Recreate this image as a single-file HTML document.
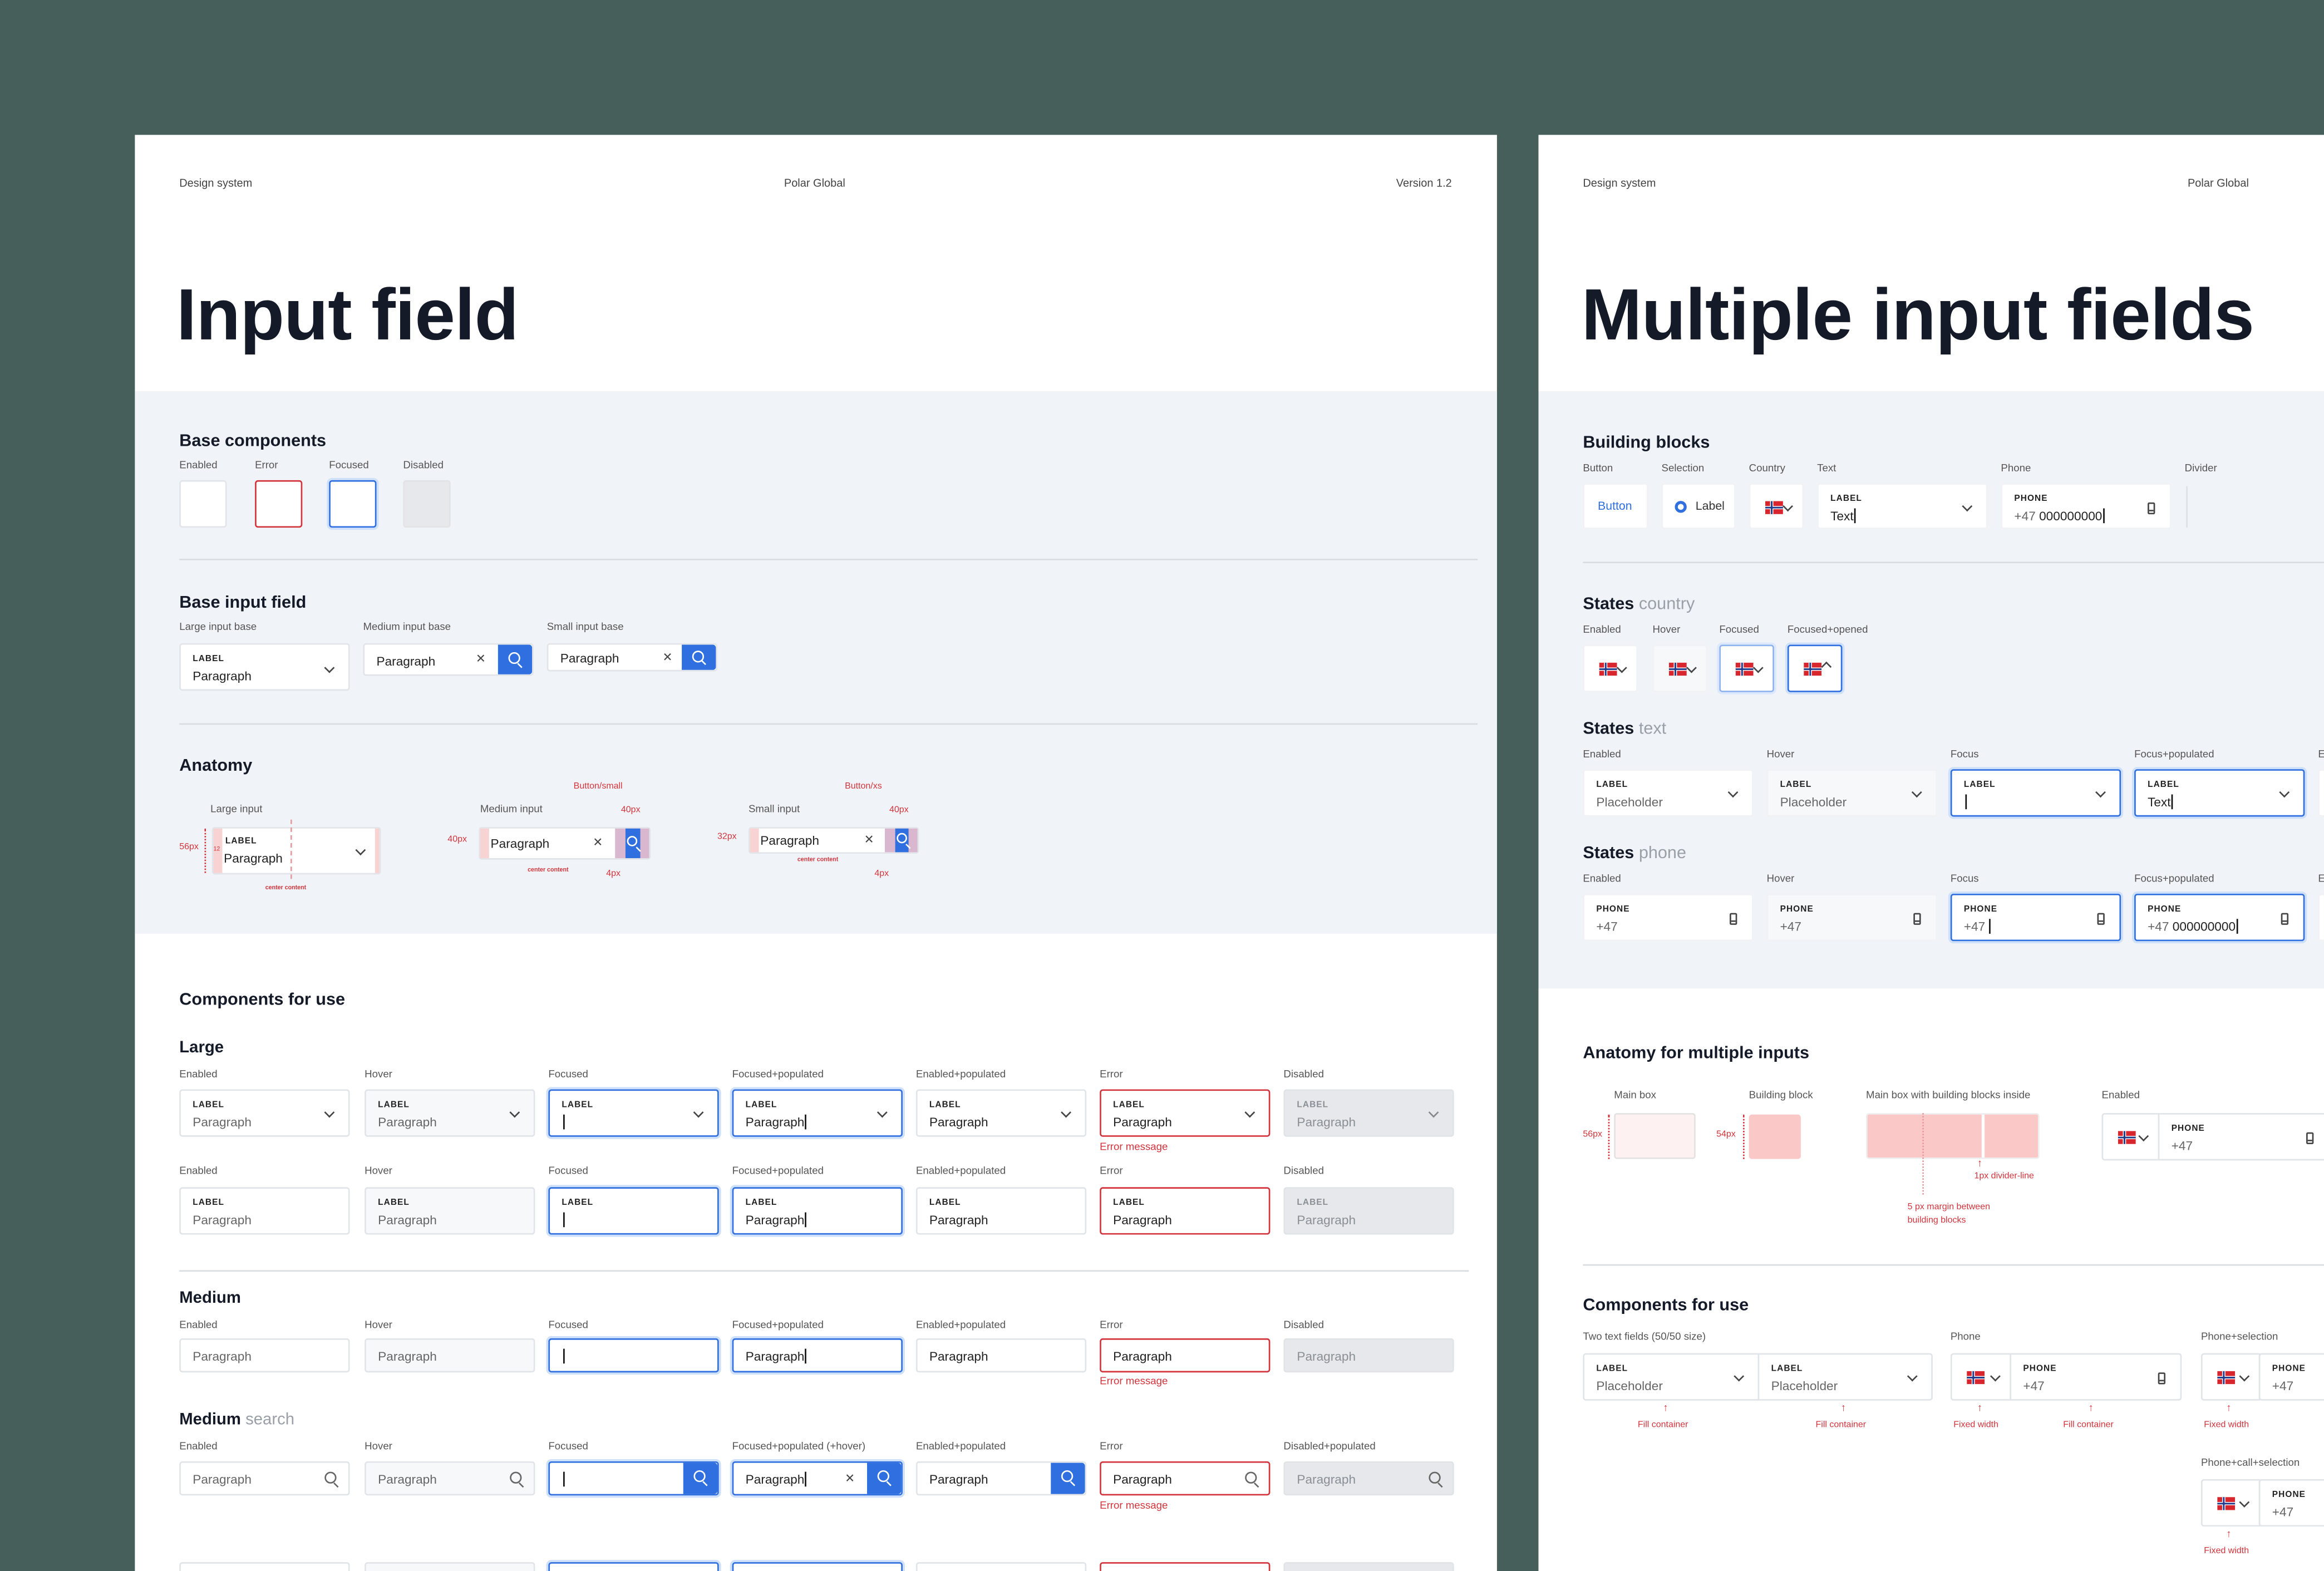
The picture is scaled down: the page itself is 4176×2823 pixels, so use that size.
<!DOCTYPE html>
<html><head><meta charset="utf-8"><style>
html,body{margin:0;padding:0;width:4176px;height:2823px;overflow:hidden;background:#475f5a}
#w{position:absolute;left:0;top:0;width:1568px;height:1060px;transform:scale(2.66327);transform-origin:0 0;font-family:"Liberation Sans",sans-serif;color:#1a1f2b;overflow:hidden}
.a{position:absolute}
.card{position:absolute;background:#fff;overflow:hidden}
.gray{position:absolute;background:#f0f3f7}
.hd{position:absolute;font-size:7.5px;color:#444;top:119px}
.ttl{position:absolute;font-size:49px;font-weight:bold;color:#141a28;letter-spacing:-0.3px;top:185px}
.h2{position:absolute;font-size:11.5px;font-weight:bold;color:#141a28;margin-top:2px}
.h3{position:absolute;font-size:11px;font-weight:bold;color:#141a28;margin-top:2px}
.h2 span,.h3 span{color:#9aa0a8;font-weight:normal}
.t{position:absolute;font-size:7px;color:#555;white-space:nowrap;margin-top:1px}
.f{position:absolute;box-sizing:border-box;width:115px;height:32px;background:#fff;border:1px solid #e1e4e8;border-radius:2px}
.hv{background:#f7f8fa}
.fo{border:1.3px solid #2f6fdf;box-shadow:0 0 0 1.5px #cfe0fa}
.er{border:1px solid #d3343c}
.di{background:#e6e8eb;border-color:#e1e3e6}
.L{position:absolute;left:8px;top:7px;font-size:5.8px;font-weight:bold;color:#222;letter-spacing:.4px;font-style:normal}
.P{position:absolute;left:8px;top:16px;font-size:8.5px;color:#666;font-style:normal;white-space:nowrap}
.m .P{top:6px}
.dk{color:#222}
.di .L,.di .P{color:#8a8f96}
.ch{position:absolute;right:11px;top:12px;width:3.5px;height:3.5px;border-right:1px solid #444;border-bottom:1px solid #444;transform:rotate(45deg)}
.up{transform:rotate(-135deg);top:14px}
.m .ch{top:7px}
.cu{display:inline-block;width:.8px;height:10px;background:#111;vertical-align:-2px;margin-left:.5px}
.srb{position:absolute;right:0;top:0;bottom:0;width:23px;background:#2f6fdf;border-radius:0 2px 2px 0}
.sr{position:absolute;width:6px;height:6px;border:1.1px solid #fff;border-radius:50%;left:7px;top:5px}
.sr:after{content:"";position:absolute;width:1.2px;height:3.5px;background:#fff;left:6px;top:5.5px;transform:rotate(-45deg)}
.sg{border-color:#666;left:auto;right:8px;top:6px}
.sg:after{background:#666}
.x{position:absolute;font-size:8px;color:#444}
.ph{position:absolute;right:10px;top:12px;width:3.5px;height:6px;border:.9px solid #444;border-radius:1px}
.ph:after{content:"";position:absolute;left:0;right:0;bottom:1px;border-top:.6px solid #444}
.emsg{position:absolute;font-size:7px;color:#d3343c;margin-top:1px}
.line{position:absolute;height:1px;background:#d9dde2}
.red{position:absolute;color:#d3343c;font-size:6px;white-space:nowrap}
.flag{position:absolute;width:12px;height:9px;display:block}
.cty{position:absolute;box-sizing:border-box;height:32px;background:#fff;border:1px solid #e1e4e8;border-radius:2px}
.cty .flag{left:10px;top:11px}
.cty .ch{right:8px;top:12px}
</style></head><body><div id="w">

<svg width="0" height="0" style="position:absolute"><defs><g id="no"><rect width="22" height="16" fill="#d8262e"/><rect x="6" width="4" height="16" fill="#fff"/><rect y="6" width="22" height="4" fill="#fff"/><rect x="7" width="2" height="16" fill="#1e3a8a"/><rect y="7" width="22" height="2" fill="#1e3a8a"/></g></defs></svg>

<!-- LEFT CARD -->
<div class="card" style="left:91px;top:91px;width:919px;height:980px">
<div style="position:absolute;left:-91px;top:-91px;width:1200px;height:1100px">
<div class="hd" style="left:121px">Design system</div>
<div class="hd" style="left:529px">Polar Global</div>
<div class="hd" style="left:942px">Version 1.2</div>
<div class="ttl" style="left:119px">Input field</div>
<div class="gray" style="left:91px;top:264px;width:919px;height:366px"></div>

<div class="h2" style="left:121px;top:290px">Base components</div>
<div class="t" style="left:121px;top:310px">Enabled</div>
<div class="t" style="left:172px;top:310px">Error</div>
<div class="t" style="left:222px;top:310px">Focused</div>
<div class="t" style="left:272px;top:310px">Disabled</div>
<div class="f" style="left:121px;top:324px;width:32px;height:32px"></div>
<div class="f er" style="left:172px;top:324px;width:32px;height:32px"></div>
<div class="f fo" style="left:222px;top:324px;width:32px;height:32px"></div>
<div class="f di" style="left:272px;top:324px;width:32px;height:32px"></div>
<div class="line" style="left:121px;top:377px;width:876px"></div>

<div class="h2" style="left:121px;top:399px">Base input field</div>
<div class="t" style="left:121px;top:419px">Large input base</div>
<div class="t" style="left:245px;top:419px">Medium input base</div>
<div class="t" style="left:369px;top:419px">Small input base</div>
<div class="f" style="left:121px;top:434px;height:32px"><i class="L">LABEL</i><i class="P dk">Paragraph</i><b class="ch" style="top:13px"></b></div>
<div class="f m" style="left:245px;top:434px;height:22px"><i class="P dk">Paragraph</i><span class="x" style="left:75px;top:5px">✕</span><div class="srb"><i class="sr"></i></div></div>
<div class="f m" style="left:369px;top:434px;height:19px"><i class="P dk" style="top:4px">Paragraph</i><span class="x" style="left:77px;top:4px">✕</span><div class="srb"><i class="sr" style="top:3.5px"></i></div></div>
<div class="line" style="left:121px;top:488px;width:876px"></div>

<div class="h2" style="left:121px;top:509px">Anatomy</div>
<div class="t" style="left:142px;top:542px">Large input</div>
<div class="f" style="left:143px;top:558px;width:114px;height:32px"><div class="a" style="left:0;top:0;bottom:0;width:6px;background:#f8d3d3"></div><div class="a" style="right:0;top:0;bottom:0;width:3px;background:#f8d3d3"></div><i class="L" style="left:8px;top:6px">LABEL</i><i class="P dk" style="left:7px;top:15px">Paragraph</i><b class="ch"></b></div>
<div class="red" style="left:121px;top:569px">56px</div>
<div class="a" style="left:138px;top:559px;height:30px;border-left:1px dotted #d3343c"></div>
<div class="red" style="left:144px;top:570px;font-size:4px">12</div>
<div class="red" style="left:179px;top:596px;font-weight:bold;font-size:4px">center content</div>
<div class="a" style="left:196px;top:553px;height:40px;border-left:.7px dashed #e59a9e"></div>
<div class="t" style="left:324px;top:542px">Medium input</div>
<div class="red" style="left:387px;top:528px">Button/small</div>
<div class="red" style="left:419px;top:544px">40px</div>
<div class="f" style="left:323px;top:558px;width:116px;height:22px"><div class="a" style="left:0;top:0;bottom:0;width:6px;background:#f8d3d3"></div><i class="P dk" style="left:7px;top:5px">Paragraph</i><span class="x" style="left:76px;top:5px">✕</span><div class="a" style="right:0;top:0;bottom:0;width:23px;background:#d9b8cf"></div><div class="a" style="right:6px;top:0;bottom:0;width:10px;background:#2f6fdf"></div><i class="sr" style="left:99px;top:5px;width:5px;height:5px"></i></div>
<div class="red" style="left:302px;top:564px">40px</div>
<div class="red" style="left:356px;top:584px;font-weight:bold;font-size:4px">center content</div>
<div class="red" style="left:409px;top:587px">4px</div>
<div class="t" style="left:505px;top:542px">Small input</div>
<div class="red" style="left:570px;top:528px">Button/xs</div>
<div class="red" style="left:600px;top:544px">40px</div>
<div class="f" style="left:505px;top:558px;width:115px;height:18px"><div class="a" style="left:0;top:0;bottom:0;width:6px;background:#f8d3d3"></div><i class="P dk" style="left:7px;top:3px">Paragraph</i><span class="x" style="left:77px;top:3px">✕</span><div class="a" style="right:0;top:0;bottom:0;width:22px;background:#d9b8cf"></div><div class="a" style="right:6px;top:0;bottom:0;width:9px;background:#2f6fdf"></div><i class="sr" style="left:99px;top:3px;width:5px;height:5px"></i></div>
<div class="red" style="left:484px;top:562px">32px</div>
<div class="red" style="left:538px;top:577px;font-weight:bold;font-size:4px">center content</div>
<div class="red" style="left:590px;top:587px">4px</div>

<div class="h2" style="left:121px;top:667px">Components for use</div>
<div class="h3" style="left:121px;top:699px">Large</div>

<div class="t" style="left:121px;top:721px">Enabled</div><div class="t" style="left:246px;top:721px">Hover</div><div class="t" style="left:370px;top:721px">Focused</div><div class="t" style="left:494px;top:721px">Focused+populated</div><div class="t" style="left:618px;top:721px">Enabled+populated</div><div class="t" style="left:742px;top:721px">Error</div><div class="t" style="left:866px;top:721px">Disabled</div>
<div class="f" style="left:121px;top:735px"><i class="L">LABEL</i><i class="P">Paragraph</i><b class="ch"></b></div>
<div class="f hv" style="left:246px;top:735px"><i class="L">LABEL</i><i class="P">Paragraph</i><b class="ch"></b></div>
<div class="f fo" style="left:370px;top:735px"><i class="L">LABEL</i><i class="P"><span class="cu"></span></i><b class="ch"></b></div>
<div class="f fo" style="left:494px;top:735px"><i class="L">LABEL</i><i class="P dk">Paragraph<span class="cu"></span></i><b class="ch"></b></div>
<div class="f" style="left:618px;top:735px"><i class="L">LABEL</i><i class="P dk">Paragraph</i><b class="ch"></b></div>
<div class="f er" style="left:742px;top:735px"><i class="L">LABEL</i><i class="P dk">Paragraph</i><b class="ch"></b></div>
<div class="f di" style="left:866px;top:735px"><i class="L">LABEL</i><i class="P">Paragraph</i><b class="ch" style="border-color:#888"></b></div>
<div class="emsg" style="left:742px;top:770px">Error message</div>

<div class="t" style="left:121px;top:786px">Enabled</div><div class="t" style="left:246px;top:786px">Hover</div><div class="t" style="left:370px;top:786px">Focused</div><div class="t" style="left:494px;top:786px">Focused+populated</div><div class="t" style="left:618px;top:786px">Enabled+populated</div><div class="t" style="left:742px;top:786px">Error</div><div class="t" style="left:866px;top:786px">Disabled</div>
<div class="f" style="left:121px;top:801px"><i class="L">LABEL</i><i class="P">Paragraph</i></div>
<div class="f hv" style="left:246px;top:801px"><i class="L">LABEL</i><i class="P">Paragraph</i></div>
<div class="f fo" style="left:370px;top:801px"><i class="L">LABEL</i><i class="P"><span class="cu"></span></i></div>
<div class="f fo" style="left:494px;top:801px"><i class="L">LABEL</i><i class="P dk">Paragraph<span class="cu"></span></i></div>
<div class="f" style="left:618px;top:801px"><i class="L">LABEL</i><i class="P dk">Paragraph</i></div>
<div class="f er" style="left:742px;top:801px"><i class="L">LABEL</i><i class="P dk">Paragraph</i></div>
<div class="f di" style="left:866px;top:801px"><i class="L">LABEL</i><i class="P">Paragraph</i></div>
<div class="line" style="left:121px;top:857px;width:870px"></div>

<div class="h3" style="left:121px;top:868px">Medium</div>
<div class="t" style="left:121px;top:890px">Enabled</div><div class="t" style="left:246px;top:890px">Hover</div><div class="t" style="left:370px;top:890px">Focused</div><div class="t" style="left:494px;top:890px">Focused+populated</div><div class="t" style="left:618px;top:890px">Enabled+populated</div><div class="t" style="left:742px;top:890px">Error</div><div class="t" style="left:866px;top:890px">Disabled</div>
<div class="f m" style="left:121px;top:903px;height:23px"><i class="P">Paragraph</i></div>
<div class="f m hv" style="left:246px;top:903px;height:23px"><i class="P">Paragraph</i></div>
<div class="f m fo" style="left:370px;top:903px;height:23px"><i class="P"><span class="cu"></span></i></div>
<div class="f m fo" style="left:494px;top:903px;height:23px"><i class="P dk">Paragraph<span class="cu"></span></i></div>
<div class="f m" style="left:618px;top:903px;height:23px"><i class="P dk">Paragraph</i></div>
<div class="f m er" style="left:742px;top:903px;height:23px"><i class="P dk">Paragraph</i></div>
<div class="f m di" style="left:866px;top:903px;height:23px"><i class="P">Paragraph</i></div>
<div class="emsg" style="left:742px;top:928px">Error message</div>

<div class="h3" style="left:121px;top:950px">Medium <span>search</span></div>
<div class="t" style="left:121px;top:972px">Enabled</div><div class="t" style="left:246px;top:972px">Hover</div><div class="t" style="left:370px;top:972px">Focused</div><div class="t" style="left:494px;top:972px">Focused+populated (+hover)</div><div class="t" style="left:618px;top:972px">Enabled+populated</div><div class="t" style="left:742px;top:972px">Error</div><div class="t" style="left:866px;top:972px">Disabled+populated</div>
<div class="f m" style="left:121px;top:986px;height:23px"><i class="P">Paragraph</i><i class="sr sg"></i></div>
<div class="f m hv" style="left:246px;top:986px;height:23px"><i class="P">Paragraph</i><i class="sr sg"></i></div>
<div class="f m fo" style="left:370px;top:986px;height:23px"><i class="P"><span class="cu"></span></i><div class="srb"><i class="sr"></i></div></div>
<div class="f m fo" style="left:494px;top:986px;height:23px"><i class="P dk">Paragraph<span class="cu"></span></i><span class="x" style="left:75px;top:6px">✕</span><div class="srb"><i class="sr"></i></div></div>
<div class="f m" style="left:618px;top:986px;height:23px"><i class="P dk">Paragraph</i><div class="srb"><i class="sr"></i></div></div>
<div class="f m er" style="left:742px;top:986px;height:23px"><i class="P dk">Paragraph</i><i class="sr sg"></i></div>
<div class="f m di" style="left:866px;top:986px;height:23px"><i class="P">Paragraph</i><i class="sr sg"></i></div>
<div class="emsg" style="left:742px;top:1012px">Error message</div>

<div class="f" style="left:121px;top:1054px"></div><div class="f hv" style="left:246px;top:1054px"></div><div class="f fo" style="left:370px;top:1054px"></div><div class="f fo" style="left:494px;top:1054px"></div><div class="f" style="left:618px;top:1054px"></div><div class="f er" style="left:742px;top:1054px"></div><div class="f di" style="left:866px;top:1054px"></div>
</div></div>

<!-- RIGHT CARD -->
<div class="card" style="left:1038px;top:91px;width:600px;height:980px">
<div style="position:absolute;left:-1038px;top:-91px;width:1700px;height:1100px">
<div class="hd" style="left:1068px">Design system</div>
<div class="hd" style="left:1476px">Polar Global</div>
<div class="ttl" style="left:1067px">Multiple input fields</div>
<div class="gray" style="left:1038px;top:264px;width:600px;height:403px"></div>

<div class="h2" style="left:1068px;top:291px">Building blocks</div>
<div class="t" style="left:1068px;top:312px">Button</div><div class="t" style="left:1121px;top:312px">Selection</div><div class="t" style="left:1180px;top:312px">Country</div><div class="t" style="left:1226px;top:312px">Text</div><div class="t" style="left:1350px;top:312px">Phone</div><div class="t" style="left:1474px;top:312px">Divider</div>
<div class="f" style="left:1068px;top:326px;width:44px;height:31px;border-color:#f0f2f5"><span class="a" style="left:9px;top:10px;font-size:8px;color:#2f6fdf">Button</span></div>
<div class="f" style="left:1121px;top:326px;width:50px;height:31px;border-color:#f0f2f5"><span class="a" style="left:8px;top:11px;width:4px;height:4px;border:2.2px solid #2f6fdf;border-radius:50%"></span><span class="a" style="left:22px;top:10px;font-size:8px;color:#333">Label</span></div>
<div class="cty" style="left:1180px;top:326px;width:37px;height:31px;border-color:#f0f2f5"><svg class="flag" viewBox="0 0 22 16"><use href="#no"/></svg><b class="ch"></b></div>
<div class="f" style="left:1226px;top:326px;height:31px;border-color:#f0f2f5"><i class="L">LABEL</i><i class="P dk">Text<span class="cu"></span></i><b class="ch"></b></div>
<div class="f" style="left:1350px;top:326px;height:31px;border-color:#f0f2f5"><i class="L">PHONE</i><i class="P">+47 <span class="dk">000000000</span><span class="cu"></span></i><i class="ph"></i></div>
<div class="a" style="left:1475px;top:328px;width:1px;height:28px;background:#dde0e4"></div>
<div class="line" style="left:1068px;top:379px;width:520px"></div>

<div class="h2" style="left:1068px;top:400px">States <span>country</span></div>
<div class="t" style="left:1068px;top:421px">Enabled</div><div class="t" style="left:1115px;top:421px">Hover</div><div class="t" style="left:1160px;top:421px">Focused</div><div class="t" style="left:1206px;top:421px">Focused+opened</div>
<div class="cty" style="left:1068px;top:435px;width:37px;border-color:#f0f2f5"><svg class="flag" viewBox="0 0 22 16"><use href="#no"/></svg><b class="ch"></b></div>
<div class="cty" style="left:1115px;top:435px;width:37px;border-color:#f0f2f5;background:#f7f8fa"><svg class="flag" viewBox="0 0 22 16"><use href="#no"/></svg><b class="ch"></b></div>
<div class="cty" style="left:1160px;top:435px;width:37px;border:1.3px solid #8fb3ee;box-shadow:0 0 0 1.5px #dce8fb"><svg class="flag" viewBox="0 0 22 16"><use href="#no"/></svg><b class="ch"></b></div>
<div class="cty" style="left:1206px;top:435px;width:37px;border:1.3px solid #2f6fdf;box-shadow:0 0 0 1.5px #cfe0fa"><svg class="flag" viewBox="0 0 22 16"><use href="#no"/></svg><b class="ch up"></b></div>

<div class="h2" style="left:1068px;top:484px">States <span>text</span></div>
<div class="t" style="left:1068px;top:505px">Enabled</div><div class="t" style="left:1192px;top:505px">Hover</div><div class="t" style="left:1316px;top:505px">Focus</div><div class="t" style="left:1440px;top:505px">Focus+populated</div><div class="t" style="left:1564px;top:505px">E</div>
<div class="f" style="left:1068px;top:519px;border-color:#f0f2f5"><i class="L">LABEL</i><i class="P">Placeholder</i><b class="ch"></b></div>
<div class="f hv" style="left:1192px;top:519px;border-color:#f0f2f5"><i class="L">LABEL</i><i class="P">Placeholder</i><b class="ch"></b></div>
<div class="f fo" style="left:1316px;top:519px"><i class="L">LABEL</i><i class="P"><span class="cu"></span></i><b class="ch"></b></div>
<div class="f fo" style="left:1440px;top:519px"><i class="L">LABEL</i><i class="P dk">Text<span class="cu"></span></i><b class="ch"></b></div>
<div class="f" style="left:1564px;top:519px;border-color:#f0f2f5"></div>

<div class="h2" style="left:1068px;top:568px">States <span>phone</span></div>
<div class="t" style="left:1068px;top:589px">Enabled</div><div class="t" style="left:1192px;top:589px">Hover</div><div class="t" style="left:1316px;top:589px">Focus</div><div class="t" style="left:1440px;top:589px">Focus+populated</div><div class="t" style="left:1564px;top:589px">E</div>
<div class="f" style="left:1068px;top:603px;border-color:#f0f2f5"><i class="L">PHONE</i><i class="P">+47</i><i class="ph"></i></div>
<div class="f hv" style="left:1192px;top:603px;border-color:#f0f2f5"><i class="L">PHONE</i><i class="P">+47</i><i class="ph"></i></div>
<div class="f fo" style="left:1316px;top:603px"><i class="L">PHONE</i><i class="P">+47 <span class="cu"></span></i><i class="ph"></i></div>
<div class="f fo" style="left:1440px;top:603px"><i class="L">PHONE</i><i class="P">+47 <span class="dk">000000000</span><span class="cu"></span></i><i class="ph"></i></div>
<div class="f" style="left:1564px;top:603px;border-color:#f0f2f5"></div>

<div class="h2" style="left:1068px;top:703px">Anatomy for multiple inputs</div>
<div class="t" style="left:1089px;top:735px">Main box</div><div class="t" style="left:1180px;top:735px">Building block</div><div class="t" style="left:1259px;top:735px">Main box with building blocks inside</div><div class="t" style="left:1418px;top:735px">Enabled</div>
<div class="a" style="left:1089px;top:751px;width:55px;height:31px;box-sizing:border-box;background:#fdf1f1;border:1px solid #e2e2e2;border-radius:2px"></div>
<div class="red" style="left:1068px;top:763px">56px</div>
<div class="a" style="left:1085px;top:752px;height:30px;border-left:1px dotted #d3343c"></div>
<div class="a" style="left:1180px;top:752px;width:35px;height:30px;background:#fbc8c8;border-radius:2px"></div>
<div class="red" style="left:1158px;top:763px">54px</div>
<div class="a" style="left:1176px;top:752px;height:30px;border-left:1px dotted #d3343c"></div>
<div class="a" style="left:1259px;top:751px;width:117px;height:31px;background:#fbc8c8;border-radius:2px;border:1px solid #eee;box-sizing:border-box"></div>
<div class="a" style="left:1297px;top:751px;height:55px;border-left:1.5px dotted #e59a9e"></div>
<div class="a" style="left:1337px;top:752px;width:1.5px;height:29px;background:#fff"></div>
<div class="red" style="left:1334px;top:782px;font-size:7px">↑</div>
<div class="red" style="left:1332px;top:791px">1px divider-line</div>
<div class="red" style="left:1287px;top:812px">5 px margin between</div>
<div class="red" style="left:1287px;top:821px">building blocks</div>
<div class="cty" style="left:1418px;top:751px;width:39px;border-radius:2px 0 0 2px"><svg class="flag" viewBox="0 0 22 16"><use href="#no"/></svg><b class="ch"></b></div>
<div class="f" style="left:1456px;top:751px;width:130px;border-radius:0 2px 2px 0"><i class="L">PHONE</i><i class="P">+47</i><i class="ph" style="right:24px"></i></div>
<div class="line" style="left:1068px;top:853px;width:520px"></div>

<div class="h2" style="left:1068px;top:873px">Components for use</div>
<div class="t" style="left:1068px;top:898px">Two text fields (50/50 size)</div><div class="t" style="left:1316px;top:898px">Phone</div><div class="t" style="left:1485px;top:898px">Phone+selection</div><div class="t" style="left:1485px;top:983px">Phone+call+selection</div>
<div class="f" style="left:1068px;top:913px;width:119px;border-radius:2px 0 0 2px"><i class="L">LABEL</i><i class="P">Placeholder</i><b class="ch"></b></div>
<div class="f" style="left:1186px;top:913px;width:118px;border-radius:0 2px 2px 0"><i class="L">LABEL</i><i class="P">Placeholder</i><b class="ch"></b></div>
<div class="cty" style="left:1316px;top:913px;width:41px;border-radius:2px 0 0 2px"><svg class="flag" viewBox="0 0 22 16"><use href="#no"/></svg><b class="ch"></b></div>
<div class="f" style="left:1356px;top:913px;width:116px;border-radius:0 2px 2px 0"><i class="L">PHONE</i><i class="P">+47</i><i class="ph"></i></div>
<div class="cty" style="left:1485px;top:913px;width:40px;border-radius:2px 0 0 2px"><svg class="flag" viewBox="0 0 22 16"><use href="#no"/></svg><b class="ch"></b></div>
<div class="f" style="left:1524px;top:913px;width:80px"><i class="L">PHONE</i><i class="P">+47</i></div>
<div class="cty" style="left:1485px;top:998px;width:40px;border-radius:2px 0 0 2px"><svg class="flag" viewBox="0 0 22 16"><use href="#no"/></svg><b class="ch"></b></div>
<div class="f" style="left:1524px;top:998px;width:80px"><i class="L">PHONE</i><i class="P">+47</i></div>
<div class="red" style="left:1122px;top:947px;font-size:7px">↑</div><div class="red" style="left:1105px;top:959px">Fill container</div>
<div class="red" style="left:1242px;top:947px;font-size:7px">↑</div><div class="red" style="left:1225px;top:959px">Fill container</div>
<div class="red" style="left:1334px;top:947px;font-size:7px">↑</div><div class="red" style="left:1318px;top:959px">Fixed width</div>
<div class="red" style="left:1409px;top:947px;font-size:7px">↑</div><div class="red" style="left:1392px;top:959px">Fill container</div>
<div class="red" style="left:1502px;top:947px;font-size:7px">↑</div><div class="red" style="left:1487px;top:959px">Fixed width</div>
<div class="red" style="left:1502px;top:1032px;font-size:7px">↑</div><div class="red" style="left:1487px;top:1044px">Fixed width</div>
</div></div>

</div></body></html>
